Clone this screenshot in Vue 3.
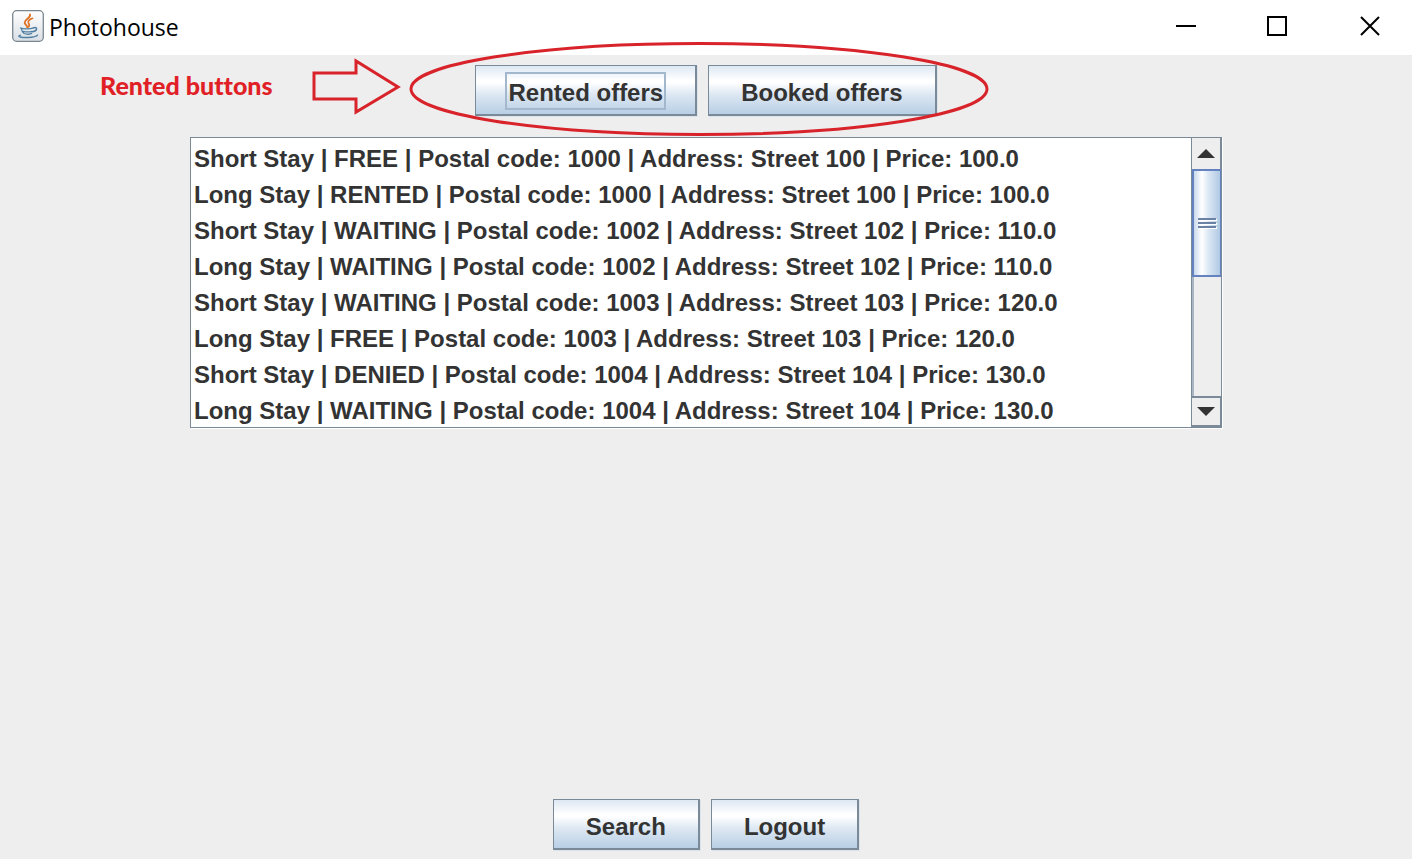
<script setup>
import { ref } from 'vue'

const selected = ref('Rented offers')
const offers = [
  ['Short Stay', 'FREE', 1000, 100, '100.0'],
  ['Long Stay', 'RENTED', 1000, 100, '100.0'],
  ['Short Stay', 'WAITING', 1002, 102, '110.0'],
  ['Long Stay', 'WAITING', 1002, 102, '110.0'],
  ['Short Stay', 'WAITING', 1003, 103, '120.0'],
  ['Long Stay', 'FREE', 1003, 103, '120.0'],
  ['Short Stay', 'DENIED', 1004, 104, '130.0'],
  ['Long Stay', 'WAITING', 1004, 104, '130.0'],
].map(([stay, status, code, street, price]) =>
  `${stay} | ${status} | Postal code: ${code} | Address: Street ${street} | Price: ${price}`)
</script>

<template>
  <div class="window">
    <header class="titlebar">
      <svg class="logo" width="32" height="32" viewBox="0 0 32 32" aria-hidden="true">
        <defs>
          <linearGradient id="tile" x1="0" y1="0" x2="0" y2="1">
            <stop offset="0" stop-color="#ffffff" />
            <stop offset="1" stop-color="#d9dfe5" />
          </linearGradient>
        </defs>
        <rect x="0.7" y="0.7" width="30.6" height="30.6" rx="4" fill="url(#tile)" stroke="#7b8790" stroke-width="1.3" />
        <g fill="none" stroke-linecap="round">
          <path d="M18 4.500c1.200 3.500-5.500 4.500-5.300 8 0 2 2.300 2.800 2.600 4.800" stroke="#df7428" stroke-width="1.900" />
          <path d="M20.500 8.300c-3 1.200-5 2.700-4 4.700 .9 1.500 1.300 2.800 0 4" stroke="#df7428" stroke-width="1.700" />
          <path d="M8.500 18c3 1.200 10 1 13-.2" stroke="#4f7fa3" stroke-width="1.300" />
          <path d="M9.300 18.500c.4 2.500 1.500 4.300 2.800 5 2.500 1 5.500.8 7.500-.2M11 21.300c3 .8 6.500.7 9.300 0" stroke="#4f7fa3" stroke-width="1.300" />
          <path d="M21.500 17.800c4.200-1.200 4.400 2.700-.8 4" stroke="#4f7fa3" stroke-width="1.400" />
          <path d="M8.500 25.200c-4.800 1.500 1.500 2.500 7.500 2.300 4.500-.1 8.500-.8 9.500-2.300" stroke="#4f7fa3" stroke-width="1.400" />
        </g>
      </svg>
      <h1 class="title">Photohouse</h1>
      <div class="controls">
        <button type="button" aria-label="Minimize">
          <svg width="22" height="22" viewBox="0 0 22 22"><path d="M1 11h20" /></svg>
        </button>
        <button type="button" aria-label="Maximize">
          <svg width="22" height="22" viewBox="0 0 22 22"><path d="M1 2h18v18H1z" /></svg>
        </button>
        <button type="button" aria-label="Close">
          <svg width="22" height="22" viewBox="0 0 22 22"><path d="M2 2l18 18M20 2L2 20" /></svg>
        </button>
      </div>
    </header>

    <main class="content">
      <div class="toolbar">
        <button
          v-for="name in ['Rented offers', 'Booked offers']"
          :key="name"
          type="button"
          class="metal"
          :class="{ focused: selected === name }"
          @click="selected = name"
        ><span>{{ name }}</span></button>
        <div class="note">
          <strong>Rented buttons</strong>
          <svg width="680" height="96" viewBox="0 0 680 96" aria-hidden="true">
            <path d="M4 32h42V20l42 26-42 25V58H4z" />
            <ellipse cx="389" cy="48" rx="288" ry="45.500" />
          </svg>
        </div>
      </div>

      <section class="listbox" aria-label="Offers">
        <ul>
          <li v-for="offer in offers" :key="offer">{{ offer }}</li>
        </ul>
        <div class="scrollbar">
          <button type="button" class="arrow" aria-label="Scroll up">
            <svg width="18" height="9" viewBox="0 0 18 9"><path d="M0 9L9 0l9 9z" /></svg>
          </button>
          <div class="track">
            <div class="thumb"><i></i><i></i><i></i></div>
          </div>
          <button type="button" class="arrow down" aria-label="Scroll down">
            <svg width="18" height="9" viewBox="0 0 18 9"><path d="M0 0h18L9 9z" /></svg>
          </button>
        </div>
      </section>

      <footer class="actions">
        <button type="button" class="metal"><span>Search</span></button>
        <button type="button" class="metal"><span>Logout</span></button>
      </footer>
    </main>
  </div>
</template>

<style>
body { margin: 0; background: #eee; }
</style>

<style scoped>
* { box-sizing: border-box; }
.window {
  display: flex;
  flex-direction: column;
  min-height: 100vh;
  overflow: hidden;
  background: #eee;
  color: #333;
  font-family: "Liberation Sans", Arial, sans-serif;
}
.titlebar {
  display: flex;
  align-items: center;
  height: 55px;
  padding: 0 0 3px 12px;
  background: #fff;
}
.title {
  flex: 1;
  margin: 2px 0 0 5px;
  color: #000;
  font: 400 23px/32px "Open Sans", "Noto Sans", sans-serif;
}
.controls { display: flex; }
.controls button {
  display: flex;
  align-items: center;
  justify-content: center;
  width: 92px;
  height: 52px;
  padding: 0;
  border: 0;
  background: none;
}
.controls button:last-child { width: 84px; margin-left: 4px; }
.controls path { fill: none; stroke: #000; stroke-width: 2; }
.content {
  display: flex;
  flex: 1;
  flex-direction: column;
  align-items: center;
  padding: 10px 20px 9px;
}
.toolbar, .actions {
  position: relative;
  display: flex;
  justify-content: center;
  gap: 11px;
}
.actions { margin-top: auto; }
.metal {
  height: 51px;
  padding: 5px 30px 0;
  border: 1px solid #7a8a99;
  border-width: 1px 2px 2px 1px;
  box-shadow: 1px 1px #dde3ea;
  background: linear-gradient(#dde8f3 0%, #fff 30%, #fff 34%, #dce7f2 60%, #b8cfe5 100%);
  color: #333;
  font: 700 24px/32px "Liberation Sans", Arial, sans-serif;
}
.metal span {
  display: block;
  padding: 0 2px;
}
.focused span {
  margin-top: -4px;
  padding-top: 4px;
  outline: 2px solid #a3b8cc;
  outline-offset: -1px;
}
.note {
  position: absolute;
  top: -24px;
  left: calc(50% - 606px);
  display: flex;
  align-items: center;
  gap: 38px;
  pointer-events: none;
}
.note strong {
  width: 172px;
  padding-bottom: 8px;
  color: #e11f26;
  font: 900 25px/32px Lato, "Open Sans", sans-serif;
  font-variant-ligatures: none;
  white-space: nowrap;
}
.note svg { flex: none; }
.note path, .note ellipse { fill: none; stroke: #d8232a; stroke-width: 3; }
.listbox {
  display: flex;
  width: 100%;
  max-width: 1032px;
  height: 291px;
  margin-top: 21px;
  border: 1px solid #7a8a99;
  box-shadow: 1px 1px #fff;
  background: #fff;
}
ul {
  flex: 1;
  margin: 0;
  padding: 3px 0 0 3px;
  overflow: hidden;
  list-style: none;
}
li {
  font-size: 24px;
  font-weight: 700;
  line-height: 36px;
  white-space: nowrap;
}
.scrollbar {
  display: flex;
  flex-direction: column;
  width: 30px;
  border-left: 1px solid #7a8a99;
  background: #eee;
}
.arrow {
  display: flex;
  align-items: center;
  justify-content: center;
  height: 31px;
  padding: 0;
  border: 0;
  border-right: 1px solid #7a8a99;
  background: #eee;
}
.arrow path { fill: #333; }
.down { border-top: 2px solid #7a8a99; border-bottom: 2px solid #7a8a99; }
.track {
  flex: 1;
  border-left: 2px solid #a9b5c2;
}
.thumb {
  display: flex;
  flex-direction: column;
  align-items: center;
  justify-content: center;
  gap: 2px;
  height: 108px;
  margin-left: -2px;
  border: 2px solid #6382bf;
  border-right-width: 1px;
  background: linear-gradient(90deg, #c8d9ed, #fff 30%, #dce8f4 55%, #b0c9e4);
}
.thumb i {
  width: 18px;
  height: 2px;
  background: #6c82a5;
  box-shadow: 1px 1px #fff;
}
</style>
